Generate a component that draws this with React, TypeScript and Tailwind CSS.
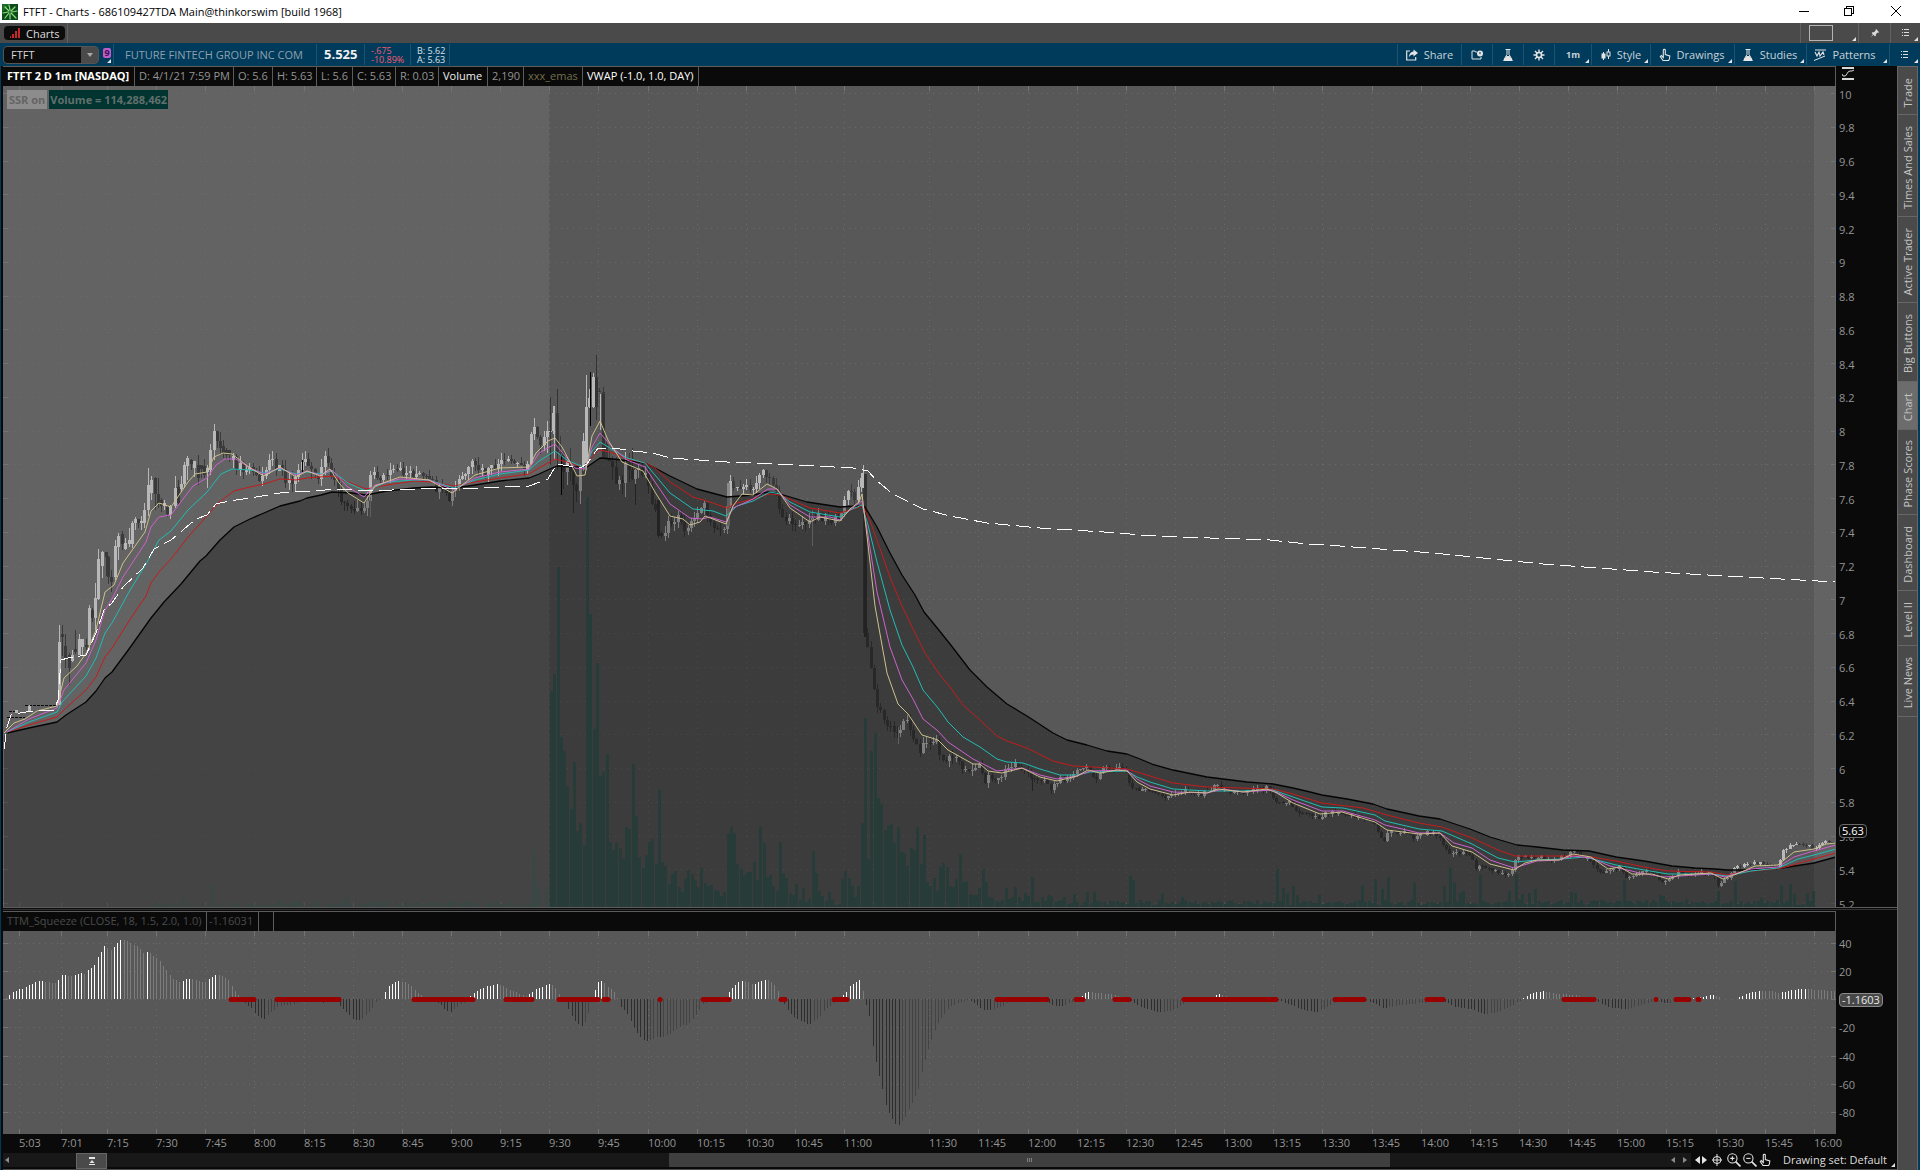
import type { ReactNode } from "react";

type Point = [number, number];

const parsePoints = (text: string): Point[] =>
  text
    .trim()
    .split(/\s+/)
    .map((pair) => pair.split(",").map(Number) as Point);

// linear interpolation along a list of points sorted by x
const valueAt = (points: Point[], x: number) => {
  if (x <= points[0][0]) return points[0][1];
  for (let i = 1; i < points.length; i++) {
    const [x0, y0] = points[i - 1];
    const [x1, y1] = points[i];
    if (x <= x1) return y0 + ((y1 - y0) * (x - x0)) / (x1 - x0);
  }
  return points[points.length - 1][1];
};

// repeatable noise, 0..1
const noise = (n: number) => {
  const v = Math.sin(n * 12.9898) * 43758.5453;
  return v - Math.floor(v);
};

const BAR = 3.27;
const LEFT = 3;
const WIDTH = 1833;
const PRICE_TOP = 86;
const PRICE_HEIGHT = 821;
const SQUEEZE_TOP = 931;
const SQUEEZE_HEIGHT = 203;
const SQUEEZE_ZERO = 999;
const OPEN_X = 549;
const CLOSE_X = 1814;

const TIMES: [string, number][] = [
  ["5:03", 19], ["7:01", 61], ["7:15", 107], ["7:30", 156], ["7:45", 205],
  ["8:00", 254], ["8:15", 304], ["8:30", 353], ["8:45", 402], ["9:00", 451],
  ["9:15", 500], ["9:30", 549], ["9:45", 598], ["10:00", 648], ["10:15", 697],
  ["10:30", 746], ["10:45", 795], ["11:00", 844], ["11:30", 929], ["11:45", 978],
  ["12:00", 1028], ["12:15", 1077], ["12:30", 1126], ["12:45", 1175], ["13:00", 1224],
  ["13:15", 1273], ["13:30", 1322], ["13:45", 1372], ["14:00", 1421], ["14:15", 1470],
  ["14:30", 1519], ["14:45", 1568], ["15:00", 1617], ["15:15", 1666], ["15:30", 1716],
  ["15:45", 1765], ["16:00", 1814],
];

const PRICES = [
  "10", "9.8", "9.6", "9.4", "9.2", "9", "8.8", "8.6", "8.4", "8.2", "8", "7.8", "7.6",
  "7.4", "7.2", "7", "6.8", "6.6", "6.4", "6.2", "6", "5.8", "5.6", "5.4", "5.2",
];
const PRICE_STEP = 33.76;

const SQUEEZE_LABELS = ["40", "20", "", "-20", "-40", "-60", "-80"];
const SQUEEZE_STEP = 28.25;

const SLOW_EMA = `7,733 29,728 57,722 66,715 86,702 96,691 105,678 112,672 129,649 151,618 164,602 181,584 200,561 206,556 220,540 234,527 250,519 264,513 280,506 300,501 307,498 321,495 332,492 352,493 366,495 387,491 414,488 432,487 454,488 475,485 500,481 529,478 539,474 552,468 557,466 573,467 587,467 600,458 613,459 630,461 645,463 655,468 670,476 697,489 712,493 727,497 753,495 768,492 780,494 807,502 840,507 857,506 865,507 877,527 890,553 902,575 915,595 924,612 938,629 950,644 970,670 987,687 1007,704 1027,716 1053,733 1067,740 1087,745 1107,751 1127,754 1140,759 1152,764 1173,770 1207,777 1247,782 1273,784 1293,788 1310,792 1322,795 1347,799 1373,804 1387,809 1419,816 1440,819 1470,829 1490,837 1517,845 1537,847 1563,850 1589,851 1616,857 1644,861 1672,866 1695,868 1715,869 1727,870 1743,870 1782,868 1814,863 1836,857`;

const RED_EMA = `7,732 29,725 57,717 66,708 86,690 96,677 105,657 112,648 129,621 146,596 151,583 159,572 171,559 188,537 206,517 218,503 234,491 250,487 264,484 280,479 296,480 307,478 332,476 348,482 366,489 387,485 414,481 432,482 454,486 475,482 500,478 529,474 539,468 555,459 567,462 585,468 592,457 600,450 613,453 627,459 645,463 655,468 670,482 693,497 710,502 727,508 737,503 753,499 770,494 780,495 810,508 840,513 863,506 870,521 878,543 890,577 902,606 913,629 925,653 940,675 950,687 963,705 980,720 997,736 1007,741 1027,748 1053,761 1073,766 1093,767 1127,769 1150,776 1173,783 1207,787 1273,789 1293,794 1322,803 1363,808 1387,815 1419,823 1442,827 1472,838 1498,850 1515,856 1585,856 1616,861 1644,867 1668,871 1711,872 1727,875 1743,872 1782,868 1814,859 1836,853`;

const CYAN_EMA = `7,732 29,722 57,712 62,702 86,676 96,658 105,633 112,623 129,592 146,564 159,540 171,531 188,510 207,492 221,474 232,469 250,470 264,473 280,469 296,474 307,472 321,474 332,471 348,483 366,491 387,482 414,480 429,480 454,488 475,480 500,474 529,470 539,461 555,451 567,460 585,468 592,451 600,442 613,450 627,458 645,463 655,475 670,493 693,509 713,511 726,516 737,506 753,501 770,492 780,494 790,502 810,512 840,517 850,510 862,505 868,525 877,562 890,610 902,645 913,667 923,690 938,708 948,722 963,737 980,747 997,759 1007,762 1023,763 1040,769 1060,775 1077,775 1090,772 1127,771 1137,777 1150,782 1173,789 1207,791 1240,791 1273,790 1293,797 1322,807 1343,808 1375,815 1385,821 1419,829 1442,831 1472,844 1498,858 1515,862 1537,860 1561,859 1585,857 1616,865 1644,870 1668,874 1711,874 1727,876 1751,871 1778,868 1798,859 1814,855 1836,849`;

const PINK_EMA = `7,732 29,719 57,708 64,690 86,663 96,640 105,610 112,599 123,577 146,542 151,527 159,517 171,515 193,486 207,478 216,465 225,459 236,459 250,468 264,474 280,468 296,475 307,471 320,475 332,470 348,487 364,497 375,485 400,479 429,480 454,490 475,478 500,472 529,469 539,453 555,444 567,458 575,468 585,469 592,447 600,433 613,448 627,460 645,467 655,482 670,504 690,518 702,519 710,517 726,522 733,508 753,499 768,489 777,489 790,505 810,517 830,517 840,520 850,510 862,501 867,529 877,592 890,647 902,680 913,699 923,719 938,731 948,742 973,759 997,771 1022,768 1040,775 1057,779 1077,776 1090,771 1127,770 1137,779 1150,786 1173,792 1207,793 1223,789 1243,792 1272,790 1293,800 1322,811 1343,811 1375,820 1385,825 1419,833 1440,833 1454,843 1472,848 1490,860 1514,868 1537,861 1559,860 1573,856 1591,858 1610,866 1640,873 1664,877 1711,874 1725,877 1751,869 1778,867 1794,857 1810,852 1836,845`;

const FAST_EMA = `4,733 14,723 25,719 37,711 57,706 61,690 64,678 77,666 87,652 96,630 105,592 114,585 123,563 145,532 151,511 159,503 171,507 188,482 195,474 207,472 214,457 223,453 232,454 250,468 264,476 280,467 296,477 307,471 320,476 330,469 339,483 348,493 364,503 375,486 386,482 400,477 429,480 452,493 475,475 500,468 529,467 536,453 548,441 555,438 562,447 572,466 577,476 585,475 592,436 600,421 608,440 622,462 643,471 655,492 670,516 683,519 690,525 700,522 705,516 726,524 733,506 742,494 753,495 767,484 777,489 790,508 810,522 820,517 840,521 850,509 859,502 862,494 867,536 875,606 887,673 898,704 908,714 922,735 938,740 948,750 973,764 980,764 988,771 1002,773 1022,768 1040,777 1057,781 1077,776 1088,770 1100,773 1117,770 1127,771 1137,782 1150,789 1173,795 1190,792 1207,793 1218,789 1243,792 1267,789 1277,793 1293,803 1320,814 1342,812 1375,822 1387,830 1419,834 1440,833 1452,846 1472,852 1490,864 1514,870 1525,863 1537,860 1559,860 1573,854 1591,857 1608,869 1620,867 1632,874 1652,874 1668,879 1680,875 1711,873 1723,879 1739,873 1755,866 1778,865 1794,852 1814,849 1826,844 1836,843`;

const VWAP = `4,749 7,727 11,715 20,713 39,710 54,710 58,700 61,660 68,658 86,655 96,633 104,610 112,603 123,587 143,568 154,549 171,540 196,519 207,515 216,504 229,501 250,498 280,493 311,491 339,489 364,491 421,489 479,488 529,486 548,479 557,464 580,468 587,464 598,448 613,448 633,451 653,453 670,458 727,462 797,465 853,468 868,471 877,481 893,494 923,509 950,516 987,523 1040,528 1120,533 1140,535 1180,537 1270,540 1307,544 1340,546 1433,553 1543,564 1653,572 1763,578 1836,582`;

// x, body top, body bottom, wick top, wick bottom, rising
const EARLY_CANDLES: number[][] = [
  [16, 710, 713, 710, 713, 1], [29, 706, 711, 705, 712, 1],
  [59, 642, 705, 625, 705, 1], [62, 634, 637, 625, 656, 0], [65, 646, 658, 634, 668, 0],
  [69, 655, 668, 653, 685, 0], [72, 655, 661, 650, 662, 1], [75, 649, 652, 630, 654, 0],
  [79, 639, 655, 634, 655, 1], [82, 639, 647, 639, 656, 1], [86, 645, 647, 639, 650, 0],
  [89, 608, 645, 605, 650, 1], [92, 610, 618, 608, 622, 0], [95, 598, 618, 583, 630, 1],
  [98, 559, 599, 549, 600, 1], [102, 552, 566, 551, 578, 1], [106, 552, 557, 552, 576, 0],
  [108, 557, 577, 556, 584, 0], [111, 577, 582, 570, 592, 0], [115, 546, 577, 540, 580, 1],
  [118, 536, 547, 533, 560, 1], [122, 534, 544, 531, 550, 0], [125, 543, 549, 538, 550, 1],
  [129, 540, 544, 528, 547, 1], [132, 523, 544, 521, 548, 1], [135, 519, 523, 517, 530, 1],
  [138, 519, 523, 519, 528, 0], [141, 521, 523, 516, 530, 1], [144, 510, 523, 503, 528, 1],
  [148, 485, 510, 468, 516, 1], [151, 480, 493, 476, 500, 1], [155, 478, 494, 477, 510, 0],
  [158, 494, 503, 478, 508, 0], [161, 500, 506, 498, 512, 0], [164, 503, 506, 500, 510, 1],
  [167, 507, 514, 505, 517, 0], [170, 506, 515, 505, 519, 1], [175, 488, 506, 476, 508, 1],
  [178, 487, 503, 480, 504, 0], [181, 484, 489, 476, 492, 1], [184, 465, 484, 462, 488, 1],
  [187, 458, 466, 456, 480, 1], [191, 460, 464, 459, 470, 0], [194, 461, 468, 461, 477, 1],
  [198, 465, 478, 455, 485, 0], [201, 465, 469, 465, 478, 0], [204, 466, 475, 459, 478, 0],
  [207, 468, 472, 465, 488, 1], [210, 450, 470, 444, 475, 1], [214, 431, 450, 424, 460, 1],
  [217, 431, 441, 431, 448, 0], [220, 441, 448, 432, 455, 0], [223, 446, 453, 440, 458, 0],
  [226, 450, 455, 448, 460, 0], [229, 450, 455, 450, 462, 0],
];

const PRICE_PATH = parsePoints(
  `232,460 246,473 252,465 259,485 264,473 270,456 275,467 280,461 286,478 295,483 299,467 306,457 311,473 321,480 324,458 330,465 336,480 343,507 352,503 357,508 367,507 370,475 384,477 396,472 411,472 425,478 439,490 450,500 459,482 473,466 486,473 500,464 512,462 527,467 532,438 534,425 542,442 548,422 552,444 555,412 558,452 568,470 575,488 582,470 586,408 589,392 592,382 596,384 600,401 603,452 610,462 620,482 628,462 637,478 645,469 648,488 655,503 658,534 667,529 675,519 683,519 687,537 693,519 703,503 712,521 720,530 727,523 730,484 737,488 745,482 753,495 757,479 762,471 770,481 778,490 781,515 790,522 800,522 810,523 817,514 830,519 840,523 843,503 848,490 855,499 859,490 863,473 865,637 869,645 872,667 876,699 882,716 890,728 898,734 905,717 912,728 917,745 922,757 925,740 937,742 944,763 948,757 957,757 962,767 973,773 980,762 985,782 990,773 997,782 1007,770 1017,763 1025,770 1033,780 1043,778 1052,788 1060,780 1073,775 1085,767 1097,777 1107,768 1122,768 1128,773 1131,788 1147,790 1163,797 1177,795 1187,788 1197,795 1208,792 1217,785 1233,793 1250,790 1268,788 1277,800 1290,802 1297,812 1310,813 1320,818 1327,812 1342,812 1359,817 1375,823 1384,842 1389,832 1407,832 1415,838 1427,832 1440,835 1448,852 1470,853 1476,867 1498,871 1512,875 1517,858 1537,857 1559,860 1573,851 1591,860 1602,873 1622,867 1626,878 1636,873 1652,872 1662,882 1680,873 1701,873 1715,875 1719,885 1729,877 1737,867 1753,862 1780,867 1782,852 1792,844 1808,845 1814,850 1822,842 1834,842`
);

const WICK_SIZE = parsePoints(
  "232,12 330,12 400,11 530,9 545,22 610,20 660,12 700,9 800,9 865,9 1000,7 1080,5 1400,4 1560,4 1836,3"
);

// long wicks that stand out: x, top, bottom, colour
const LONG_WICKS: [number, number, number, string][] = [
  [550, 397, 465, "#333"], [554, 406, 460, "#b8b8b8"], [557, 389, 470, "#333"], [573, 470, 513, "#333"],
  [586, 375, 470, "#b8b8b8"], [590, 372, 426, "#000"], [596, 355, 420, "#333"], [561, 455, 495, "#000"],
  [600, 394, 430, "#b8b8b8"], [632, 448, 462, "#333"], [635, 484, 505, "#333"], [812, 510, 546, "#888"],
  [863, 465, 480, "#b8b8b8"], [1032, 778, 791, "#333"], [898, 727, 744, "#888"], [370, 497, 517, "#888"],
  [302, 460, 474, "#000"],
];

// x, top, bottom, colour of the widest bodies round the open and the sell-off
const BIG_BODIES: [number, number, number, string][] = [
  [585, 407, 463, "#b8b8b8"], [592, 382, 407, "#b8b8b8"], [595, 380, 407, "#333"],
  [602, 394, 458, "#333"], [727, 483, 526, "#8a8a8a"], [657, 500, 536, "#333"],
  [861, 473, 488, "#b8b8b8"], [864, 474, 637, "#333"],
];

const OPEN_VOLUME = [
  216, 233, 340, 170, 156, 121, 98, 145, 76, 84, 62, 410, 293, 178, 244, 131, 135, 153, 65, 57,
  64, 59, 48, 80, 78, 143, 91, 50, 39, 52, 65, 68, 43, 117, 45, 41, 23, 33, 36, 20,
  15, 28, 37, 33, 27, 20, 39, 24, 21, 22, 17, 16, 11, 15, 73, 80, 74, 43, 38, 32,
  35, 35, 45, 27, 80, 64, 30, 32, 21, 16, 65, 34, 29, 14, 12, 23, 7, 19, 5, 8,
  56, 34, 16, 11, 6, 15, 7, 2, 3, 28, 36, 29, 21, 10, 21, 84, 189, 48, 156, 174,
  109, 103, 77, 82, 83, 64, 80, 55, 54, 41, 59, 57, 80, 43, 72, 25, 21, 29, 16, 40,
  44, 40, 21, 20, 28, 53, 25, 26, 13, 12, 12, 19, 38, 25, 10, 9, 6, 5, 7, 19,
  8, 10, 20, 10, 6, 14, 11, 30, 5, 5, 10, 6, 12, 11,
];

const VOLUME_PEAKS = parsePoints(
  `184,9 211,22 345,10 518,19 534,57 537,25 540,17 546,20 1065,10 1075,13 1088,15 1094,15 1130,31 1133,27 1163,14 1183,10 1278,38 1284,19 1288,14 1294,21 1297,12 1320,12 1363,22 1376,28 1383,18 1387,30 1415,24 1445,21 1451,39 1455,24 1459,14 1464,16 1478,21 1481,32 1508,16 1517,33 1523,13 1530,14 1536,18 1563,15 1572,15 1576,14 1599,12 1625,27 1659,12 1664,11 1687,8 1717,16 1736,26 1760,9 1782,22 1789,23 1793,14 1808,14 1812,16`
);

const SQUEEZE = parsePoints(
  `6,1 9,4 13,7 20,10 23,10 33,16 40,18 55,16 60,21 62,24 72,23 82,26 84,25 89,30 96,35 98,42 102,49 104,53 111,49 118,57 121,60 131,56 138,52 144,45 147,47 151,46 154,41 158,41 160,38 167,27 173,20 180,17 187,20 194,20 200,17 206,17 213,23 216,25 222,23 227,20 233,12 236,6 241,0 246,-5 252,-10 256,-15 262,-20 265,-20 271,-13 279,-7 294,-5 302,-3 316,0 322,-5 327,0 331,3 337,0 340,-7 347,-14 353,-20 358,-21 363,-20 369,-13 376,-3 382,0 384,5 389,13 396,18 404,17 410,14 416,8 422,3 429,0 439,-4 445,-11 451,-13 457,-8 465,-3 471,4 482,11 488,13 498,15 508,10 520,5 527,3 535,10 541,11 547,15 553,14 557,7 565,-3 570,-14 576,-24 583,-28 587,-18 590,-5 594,6 596,12 599,20 606,14 612,9 616,4 619,-5 629,-18 633,-27 639,-37 642,-40 646,-42 649,-42 656,-38 662,-38 668,-36 675,-31 681,-27 688,-25 695,-18 698,-13 703,-5 711,-2 724,0 727,4 731,10 737,16 740,19 747,17 753,14 760,18 767,20 773,15 777,11 780,3 784,-5 792,-17 799,-21 809,-26 816,-21 826,-10 833,-4 840,0 845,6 851,14 858,18 861,21 864,1 869,-17 874,-54 881,-86 887,-110 894,-124 898,-127 904,-120 911,-106 918,-90 924,-65 930,-43 937,-26 943,-16 950,-8 960,-3 967,-1 973,-3 983,-11 992,-11 1003,-7 1011,-2 1044,-1 1054,-7 1062,-7 1071,-3 1079,0 1085,6 1089,7 1100,6 1109,5 1122,2 1128,0 1136,-6 1146,-10 1159,-13 1172,-12 1183,-5 1191,0 1209,0 1218,5 1228,2 1236,0 1273,0 1280,-2 1294,-7 1307,-12 1318,-13 1325,-9 1337,-3 1368,-2 1384,-9 1402,-6 1421,-4 1443,-2 1456,-8 1470,-10 1484,-15 1498,-13 1511,-7 1521,-1 1523,1 1533,6 1543,8 1558,5 1574,4 1584,2 1594,0 1600,-4 1611,-9 1627,-10 1643,-5 1656,-2 1666,-4 1676,-3 1688,0 1713,4 1717,3 1721,0 1735,0 1749,6 1758,8 1770,8 1780,6 1792,9 1804,10 1819,9 1833,8`
);

const SQUEEZE_ON: [number, number][] = [
  [228, 256], [274, 341], [411, 475], [503, 534], [556, 600], [601, 610], [657, 662], [700, 731],
  [778, 787], [831, 849], [994, 1049], [1073, 1085], [1112, 1131], [1181, 1278], [1332, 1366],
  [1424, 1445], [1561, 1596], [1653, 1658], [1673, 1691], [1696, 1700],
];

const Grid = ({ top, height, rows }: { top: number; height: number; rows: number[] }) => (
  <g stroke="#6b6b6b" shapeRendering="crispEdges">
    {TIMES.map(([label, x]) => (
      <g key={label}>
        <path d={`M${x + 0.5} ${top}v${height}`} strokeDasharray="1 5" />
        <path d={`M${x + 0.5} ${top}v5M${x + 0.5} ${top + height - 5}v5`} stroke="#747474" />
      </g>
    ))}
    {rows.map((y) => (
      <g key={y}>
        <path d={`M${LEFT} ${y + 0.5}h${WIDTH}`} strokeDasharray="1 5" />
        <path d={`M${LEFT} ${y + 0.5}h5M${LEFT + WIDTH - 5} ${y + 0.5}h5`} stroke="#747474" />
      </g>
    ))}
  </g>
);

const Candles = () => {
  const bars: ReactNode[] = [];
  EARLY_CANDLES.forEach(([x, top, bottom, high, low, up]) => {
    const fill = up ? "#b8b8b8" : "#3a3a3a";
    bars.push(
      <g key={`e${x}`} fill={fill}>
        <rect x={x} y={high} width="1" height={low - high} />
        <rect x={x - 1} y={top} width="3" height={Math.max(1, bottom - top)} />
      </g>
    );
  });
  let open = valueAt(PRICE_PATH, 232);
  for (let i = 0; 233 + i * BAR < 1835; i++) {
    const x = Math.round(233 + i * BAR);
    const size = valueAt(WICK_SIZE, x);
    const close = valueAt(PRICE_PATH, x + 1) + (noise(i) - 0.5) * size;
    const top = Math.min(open, close);
    const height = Math.max(1, Math.abs(close - open));
    const high = top - noise(i + 900) * size * 0.8;
    const low = top + height + noise(i + 1800) * size * 0.8;
    bars.push(
      <g key={x} fill={close < open ? "#b8b8b8" : "#3a3a3a"}>
        <rect x={x} y={high} width="1" height={low - high} />
        <rect x={x - 1} y={top} width="3" height={height} />
      </g>
    );
    open = close;
  }
  return (
    <g shapeRendering="crispEdges">
      <path d="M9 711.5h8M25 705.5h32M7 717.5h18" stroke="#0a0a0a" strokeDasharray="3 1" />
      {bars}
      {LONG_WICKS.map(([x, top, bottom, color]) => (
        <rect key={x} x={x} y={top} width="1" height={bottom - top} fill={color} />
      ))}
      {BIG_BODIES.map(([x, top, bottom, color]) => (
        <rect key={x} x={x} y={top} width="3" height={bottom - top} fill={color} />
      ))}
    </g>
  );
};

const Volume = () => {
  const bars: ReactNode[] = [];
  const base = PRICE_TOP + PRICE_HEIGHT;
  for (let i = 0; 150 + i * BAR < OPEN_X; i++) {
    const x = Math.round(150 + i * BAR);
    const peak = VOLUME_PEAKS.find(([px]) => Math.abs(px - x) < 1.7);
    const h = peak ? peak[1] : Math.round(noise(i + 50) * 6);
    bars.push(<rect key={x} x={x - 1} y={base - h} width="3" height={h} fill="#3a4744" />);
  }
  for (let i = 0; OPEN_X + 2 + i * BAR < CLOSE_X; i++) {
    const x = Math.round(OPEN_X + 2 + i * BAR);
    const peak = VOLUME_PEAKS.find(([px]) => Math.abs(px - x) < 1.7);
    const h = OPEN_VOLUME[i] ?? (peak ? peak[1] : Math.round(2 + noise(i) * 5));
    bars.push(<rect key={x} x={x - 1} y={base - h} width="3" height={h} fill="#273b38" />);
  }
  return <g shapeRendering="crispEdges">{bars}</g>;
};

const PriceChart = () => (
  <svg
    className="block h-full w-full bg-[#585858]"
    viewBox={`${LEFT} ${PRICE_TOP} ${WIDTH} ${PRICE_HEIGHT}`}
    preserveAspectRatio="none"
    role="img"
    aria-label="FTFT price"
  >
    <rect x={LEFT} y={PRICE_TOP} width={OPEN_X - LEFT} height={PRICE_HEIGHT} fill="#636363" />
    <rect x={CLOSE_X} y={PRICE_TOP} width="30" height={PRICE_HEIGHT} fill="#636363" />
    <Grid
      top={PRICE_TOP}
      height={PRICE_HEIGHT}
      rows={PRICES.map((_, i) => Math.round(93 + i * PRICE_STEP))}
    />
    <Candles />
    <path d={`M4 907L4 735L${SLOW_EMA}V907Z`} fill="#000" fillOpacity=".31" />
    <Volume />
    <g fill="none" strokeWidth="1" strokeLinejoin="round">
      <polyline points={SLOW_EMA} stroke="#050505" strokeWidth="1.3" />
      <polyline points={RED_EMA} stroke="#c41c1c" />
      <polyline points={CYAN_EMA} stroke="#22bcb4" />
      <polyline points={PINK_EMA} stroke="#cc62cc" />
      <polyline points={FAST_EMA} stroke="#cdc08c" />
      <polyline points={VWAP} stroke="#fff" strokeDasharray="15 6" shapeRendering="crispEdges" />
    </g>
    <path d="M1835.5 86V907" stroke="#6a6a6a" />
  </svg>
);

const SqueezeChart = () => {
  const bars: ReactNode[] = [];
  for (let i = 0; 6 + i * BAR < 1834; i++) {
    const x = Math.round(6 + i * BAR);
    const v = Math.round(valueAt(SQUEEZE, x));
    const slope = valueAt(SQUEEZE, x) - valueAt(SQUEEZE, x - BAR);
    let fill = slope > 0.05 ? "#fff" : "#7c7c7c";
    if (v < 0) fill = slope > 0.05 ? "#434343" : "#2d2d2d";
    bars.push(
      <rect
        key={x}
        x={x}
        y={v > 0 ? SQUEEZE_ZERO - v : SQUEEZE_ZERO}
        width="1"
        height={Math.abs(v)}
        fill={fill}
      />
    );
  }
  return (
    <svg
      className="block h-full w-full bg-[#585858]"
      viewBox={`${LEFT} ${SQUEEZE_TOP} ${WIDTH} ${SQUEEZE_HEIGHT}`}
      preserveAspectRatio="none"
      role="img"
      aria-label="TTM Squeeze"
    >
      <Grid
        top={SQUEEZE_TOP}
        height={SQUEEZE_HEIGHT}
        rows={[943, 971, 999, 1027, 1056, 1084, 1112]}
      />
      <g shapeRendering="crispEdges">{bars}</g>
      <g stroke="#990000" strokeWidth="5" strokeLinecap="round">
        {SQUEEZE_ON.map(([from, to]) => (
          <path key={from} d={`M${from + 3} 999.5H${to - 2}`} />
        ))}
      </g>
    </svg>
  );
};

/* icons */

const Corner = () => (
  <svg className="absolute right-0.5 bottom-0.5 h-1 w-1" viewBox="0 0 4 4">
    <path d="M4 0v4H0z" fill="#e4e4e4" />
  </svg>
);

const LogoIcon = () => (
  <svg className="h-4 w-4" viewBox="0 0 16 16">
    <rect width="16" height="16" fill="#0d4a1c" />
    <path d="M0 0h8L0 9z" fill="#1a6b2a" />
    <path
      d="M7 7L3 3M8 6L7 1M9 7l4-4M10 8l5-1M9 9l5 5M8 10v5M7 9l-4 5M6 8L1 9"
      stroke="#8ee07a"
      strokeWidth="1.2"
      strokeLinecap="round"
    />
  </svg>
);

const ListIcon = () => (
  <svg className="h-2.5 w-3" viewBox="0 0 12 10" stroke="#dcdcdc" shapeRendering="crispEdges">
    <path d="M2 1.5h1M4 1.5h5M2 4.5h1M4 4.5h5M2 7.5h1M4 7.5h5" />
  </svg>
);

const PinIcon = () => (
  <svg className="h-2.5 w-2.5" viewBox="0 0 12 12">
    <path d="M7 1l4 4-1 .6-1-.2-2 2 .2 2L6 10 4 8 1 11l2.4-3.6L2 6l.8-1 2 .1 2-2z" fill="#dcdcdc" />
  </svg>
);

const ShareIcon = () => (
  <svg className="h-3 w-3" viewBox="0 0 12 12">
    <path d="M4 2H.7v9h9V8" fill="none" stroke="#e4e4e4" strokeWidth="1.2" />
    <path d="M7.5.5L12 4 7.5 7.5v-2C5 5.5 3.8 6.5 2.8 8.5 3 5 4.8 2.8 7.5 2.5z" fill="#e4e4e4" />
  </svg>
);

const FolderIcon = () => (
  <svg className="h-3 w-3" viewBox="0 0 12 12">
    <path d="M6 3H4.5L4 2H1v8h9V8" fill="none" stroke="#e4e4e4" />
    <circle cx="9" cy="4.5" r="3" fill="#e4e4e4" />
    <path d="M9 3v2.2" stroke="#003b5c" />
  </svg>
);

const FlaskIcon = () => (
  <svg className="h-3.5 w-3" viewBox="0 0 12 14">
    <path d="M3.5 1.5h5M5 1.5v5L2 11.5h8L7 6.5v-5" fill="none" stroke="#e4e4e4" />
    <path d="M4.5 8h3l3.5 5H1z" fill="#e4e4e4" />
  </svg>
);

const GearIcon = () => (
  <svg className="h-3 w-3" viewBox="0 0 12 12" stroke="#e4e4e4" fill="none">
    <circle cx="6" cy="6" r="2.5" strokeWidth="1.6" />
    <path d="M6 .5V3M6 9v2.5M.5 6H3M9 6h2.5M2 2l2 2M8 8l2 2M10 2L8 4M4 8l-2 2" strokeWidth="1.4" />
  </svg>
);

const StyleIcon = () => (
  <svg className="h-3 w-2.5" viewBox="0 0 10 12" stroke="#e4e4e4">
    <path d="M2.5 3v8" />
    <rect x="1" y="5" width="3" height="4" fill="#e4e4e4" />
    <path d="M7.5 0v3M7.5 7v3" />
    <rect x="6" y="3" width="3" height="4" fill="none" />
  </svg>
);

const HandIcon = () => (
  <svg className="h-3.5 w-3" viewBox="0 0 12 14" fill="none" stroke="#e4e4e4" strokeWidth="1.1">
    <path d="M4.3 9.5l-2-2-1 1 2.7 4h5.5c1-1 1.3-2.5 1.3-4.5L6.3 6.5V2c0-1-2-1-2 0z" />
  </svg>
);

const PatternsIcon = () => (
  <svg className="h-3 w-3" viewBox="0 0 12 12" fill="none" stroke="#e4e4e4">
    <path d="M1 1h11M0 11.5L11 7" />
    <path d="M1 3l2 4 2-4 1 4 3-4 1 3" strokeWidth="1.1" />
  </svg>
);

const AxisIcon = () => (
  <svg className="ml-1.5 block h-3.5 w-3" viewBox="0 0 12 14" fill="none" stroke="#d8d8d8">
    <path d="M0 2h12M0 13h12" strokeWidth="2" />
    <path d="M0 8l1 2h2c2 0 2-5 5-5h2l2-1" />
  </svg>
);

const Caret = ({ flip = false }: { flip?: boolean }) => (
  <svg className={flip ? "h-1.5 w-1 rotate-180" : "h-1.5 w-1"} viewBox="0 0 4 6">
    <path d="M4 0v6L0 3z" fill="#8a8a8a" />
  </svg>
);

interface ToolProps {
  label?: string;
  icon?: ReactNode;
  width: string;
  corner?: boolean;
  title: string;
}

const Tool = ({ label, icon, width, corner = false, title }: ToolProps) => (
  <button
    title={title}
    className={`relative flex h-full shrink-0 items-center justify-center gap-1.5 border-l border-[#1c5272] ${width}`}
  >
    {icon}
    {label && <span>{label}</span>}
    {corner && <Corner />}
  </button>
);

const HEADER_CELLS: [string, string, string][] = [
  ["FTFT 2 D 1m [NASDAQ]", "w-[132px]", "font-bold text-white"],
  ["D: 4/1/21 7:59 PM", "w-[99px]", "text-[#949494]"],
  ["O: 5.6", "w-[39px]", "text-[#949494]"],
  ["H: 5.63", "w-[44px]", "text-[#949494]"],
  ["L: 5.6", "w-[36px]", "text-[#949494]"],
  ["C: 5.63", "w-[43px]", "text-[#949494]"],
  ["R: 0.03", "w-[43px]", "text-[#949494]"],
  ["Volume", "w-[49px]", "text-[#f0f0f0]"],
  ["2,190", "w-[36px]", "text-[#949494]"],
  ["xxx_emas", "w-[59px]", "text-[#746e4c]"],
  ["VWAP (-1.0, 1.0, DAY)", "w-[116px]", "text-white"],
];

const SIDE_TABS: [string, string][] = [
  ["Trade", "h-[48px]"],
  ["Times And Sales", "h-[102px]"],
  ["Active Trader", "h-[86px]"],
  ["Big Buttons", "h-[79px]"],
  ["Chart", "h-[48px]"],
  ["Phase Scores", "h-[85px]"],
  ["Dashboard", "h-[76px]"],
  ["Level II", "h-[55px]"],
  ["Live News", "h-[71px]"],
];

const TitleBar = () => (
  <header className="flex h-[23px] shrink-0 items-center bg-white pl-0.5 text-black">
    <LogoIcon />
    <h1 className="ml-[5px] text-[11px]">FTFT - Charts - 686109427TDA Main@thinkorswim [build 1968]</h1>
    <div className="ml-auto flex h-full items-center pb-0.5">
      <button className="flex w-[45px] justify-center" aria-label="Minimize">
        <svg className="h-2.5 w-2.5" viewBox="0 0 10 10" stroke="#000" shapeRendering="crispEdges">
          <path d="M0 5.5h10" />
        </svg>
      </button>
      <button className="flex w-[45px] justify-center" aria-label="Restore">
        <svg className="h-2.5 w-2.5" viewBox="0 0 10 10" stroke="#000" fill="none" shapeRendering="crispEdges">
          <path d="M.5 2.5h7v7h-7zM2.5 2.5v-2h7v7h-2" />
        </svg>
      </button>
      <button className="flex w-[49px] justify-center" aria-label="Close">
        <svg className="h-2.5 w-2.5" viewBox="0 0 10 10" stroke="#000">
          <path d="M0 0l10 10M10 0L0 10" />
        </svg>
      </button>
    </div>
  </header>
);

const TabRow = () => (
  <div className="flex h-5 shrink-0 bg-[#4a4a4a]">
    <div className="flex items-center border-r border-[#626262] pr-0.5 pl-1">
      <button className="flex h-3.5 items-center gap-1.5 rounded bg-[#0c0c0c] px-1.5 text-[11px] text-[#dcdcdc]">
        <svg className="h-2.5 w-2.5" viewBox="0 0 10 10" fill="#c62828" shapeRendering="crispEdges">
          <path d="M0 8h1v2H0zM2 6h2v4H2zM5 3h2v7H5zM8 0h2v10H8z" />
        </svg>
        Charts
      </button>
    </div>
    <div className="ml-auto flex">
      <button
        title="Layout"
        className="relative flex w-[58px] items-center border-l border-[#626262] pl-2"
      >
        <span className="h-4 w-6 border border-[#b4b4b4]" />
        <Corner />
      </button>
      <button title="Pin" className="flex w-8 items-center justify-center border-l border-[#626262]">
        <PinIcon />
      </button>
      <button
        title="Menu"
        className="relative flex w-[30px] items-center justify-center border-l border-[#626262]"
      >
        <ListIcon />
        <Corner />
      </button>
    </div>
  </div>
);

const SymbolBar = () => (
  <div className="flex h-[23px] shrink-0 items-center bg-[#003b5c] py-px text-[12px] text-[#c8d2d8]">
    <div className="ml-[3px] flex h-[18px] w-24 items-center rounded-sm border border-[#555] bg-[#0c0c0c]">
      <input
        aria-label="Symbol"
        defaultValue="FTFT"
        className="min-w-0 flex-1 bg-transparent pl-[7px] text-[11px] text-[#d8d8d8] outline-none"
      />
      <button className="flex h-full w-[17px] items-center justify-center bg-[#4a4a4a]" aria-label="Symbols">
        <svg className="h-1 w-1.5" viewBox="0 0 6 4">
          <path d="M0 0h6L3 4z" fill="#a8a8a8" />
        </svg>
      </button>
    </div>
    <button className="relative flex h-full w-3.5 items-center justify-end" title="Link">
      <span className="mr-0.5 mb-1 h-2.5 w-2 rounded-xs bg-[#c05cc8] text-center text-[9px] leading-[10px] font-bold text-[#3c1050]">
        9
      </span>
      <Corner />
    </button>
    <div className="flex h-full w-[203px] items-center border-l border-[#1c5272] pl-[11px] text-[11px] text-[#8fa0ac]">
      FUTURE FINTECH GROUP INC COM
    </div>
    <div className="flex h-full w-12 items-center border-l border-[#1c5272] pl-[7px] text-[13px] font-bold text-[#f0f0f0]">
      5.525
    </div>
    <div className="flex h-full w-[46px] flex-col justify-center border-l border-[#1c5272] pl-1.5 text-[9px] leading-[9px] text-[#f05c70]">
      <span>-.675</span>
      <span>-10.89%</span>
    </div>
    <div className="flex h-full w-10 flex-col justify-center border-x border-[#1c5272] pl-1.5 text-[9px] leading-[9px] text-[#dce2e6]">
      <span>B: 5.62</span>
      <span>A: 5.63</span>
    </div>
    <div className="ml-auto flex h-full text-[11px]">
      <Tool title="Share" width="w-16" icon={<ShareIcon />} label="Share" />
      <Tool title="Report" width="w-[31px]" icon={<FolderIcon />} />
      <Tool title="Flask" width="w-[31px]" icon={<FlaskIcon />} />
      <Tool title="Settings" width="w-[31px]" icon={<GearIcon />} />
      <button title="Timeframe" className="relative w-[37px] border-l border-[#1c5272] text-[9px] font-bold">
        1m
        <Corner />
      </button>
      <Tool title="Style" width="w-[59px]" icon={<StyleIcon />} label="Style" corner />
      <Tool title="Drawings" width="w-[84px] pr-0.5" icon={<HandIcon />} label="Drawings" corner />
      <Tool title="Studies" width="w-[72px] pr-0.5" icon={<FlaskIcon />} label="Studies" corner />
      <Tool title="Patterns" width="w-[83px] pr-1.5" icon={<PatternsIcon />} label="Patterns" corner />
      <Tool title="More" width="w-[31px]" icon={<ListIcon />} corner />
    </div>
  </div>
);

const PricePanel = () => (
  <section className="flex min-h-0 grow-[841] basis-0">
    <div className="flex min-w-0 flex-1 flex-col">
      <div className="flex h-5 shrink-0 border-t border-r border-[#5c5c5c] text-[11px] whitespace-nowrap">
        {HEADER_CELLS.map(([text, width, color]) => (
          <span
            key={text}
            className={`flex shrink-0 items-center border-r border-[#5c5c5c] pb-0.5 pl-1 ${width} ${color}`}
          >
            {text}
          </span>
        ))}
      </div>
      <div className="relative min-h-0 flex-1">
        <PriceChart />
        <div className="absolute top-1 left-1 flex gap-0.5 text-[11px] leading-[19px] font-bold">
          <span className="bg-[#8c8c8c] px-0.5 text-[#646464]">SSR on</span>
          <span className="bg-[#003431] px-px text-[#62706c]">Volume = 114,288,462</span>
        </div>
      </div>
    </div>
    <div className="flex w-[61px] shrink-0 flex-col text-[11px]">
      <div className="h-5 shrink-0">
        <AxisIcon />
      </div>
      <div className="relative min-h-0 flex-1 overflow-hidden text-[#949494]">
        {PRICES.map((price, i) => (
          <div
            key={price}
            className="flex items-end pl-[3px] leading-4"
            style={{ height: `${((i === 0 ? 16.6 : PRICE_STEP) / PRICE_HEIGHT) * 100}%` }}
          >
            {price}
          </div>
        ))}
        <span className="absolute top-[89.9%] left-[3px] rounded border border-[#6a6a6a] bg-[#0c0c0c] px-0.5 leading-3 text-white">
          5.63
        </span>
      </div>
    </div>
  </section>
);

const SqueezePanel = () => (
  <section className="flex min-h-0 grow-[223] basis-0">
    <div className="flex min-w-0 flex-1 flex-col">
      <div className="flex h-5 shrink-0 border-t border-r border-[#5c5c5c] text-[11px] whitespace-nowrap text-[#4a4a4a]">
        <span className="flex w-[204px] items-center border-r border-[#5c5c5c] pb-0.5 pl-1">
          TTM_Squeeze (CLOSE, 18, 1.5, 2.0, 1.0)
        </span>
        <span className="flex w-[52px] items-center border-r border-[#5c5c5c] pb-0.5 pl-0.5">-1.16031</span>
        <span className="w-[15px] border-r border-[#5c5c5c]" />
      </div>
      <div className="min-h-0 flex-1">
        <SqueezeChart />
      </div>
    </div>
    <div className="flex w-[61px] shrink-0 flex-col pt-5 text-[11px] text-[#949494]">
      <div className="relative min-h-0 flex-1">
        {SQUEEZE_LABELS.map((label, i) => (
          <div
            key={i}
            className="flex items-end pl-[3px] leading-4"
            style={{ height: `${((i === 0 ? 20.5 : SQUEEZE_STEP) / SQUEEZE_HEIGHT) * 100}%` }}
          >
            {label}
          </div>
        ))}
        <span className="absolute top-[30.5%] left-[3px] rounded border border-[#8a8a8a] bg-[#484848] px-0.5 leading-3 text-[#e8e8e8]">
          -1.1603
        </span>
      </div>
    </div>
  </section>
);

const TimeAxis = () => (
  <div className="flex h-[19px] shrink-0 items-center pb-0.5 text-[11px] text-[#949494]">
    <div className="flex min-w-0 flex-1">
      <span style={{ width: `${((TIMES[0][1] - LEFT) / WIDTH) * 100}%` }} />
      {TIMES.map(([label, x], i) => {
        const next = TIMES[i + 1]?.[1] ?? LEFT + WIDTH;
        return (
          <span key={label} className="shrink-0" style={{ width: `${((next - x) / WIDTH) * 100}%` }}>
            {label}
          </span>
        );
      })}
    </div>
    <div className="w-[61px] shrink-0" />
  </div>
);

const ScrollBar = () => (
  <div className="flex h-[17px] shrink-0 border-b border-[#4a4a4a] text-[#dcdcdc]">
    <div className="flex h-3.5 w-[73px] shrink-0 items-center bg-[#181818] pl-0.5">
      <Caret />
    </div>
    <button
      title="Expand"
      className="flex h-4 w-[31px] shrink-0 items-center justify-center border border-[#666] bg-[#4a4a4a]"
    >
      <svg className="h-2.5 w-2.5" viewBox="0 0 10 10" fill="#e4e4e4">
        <path d="M2 1h6v2H2zM5 4l2.5 3h-5zM2 8h6v1H2z" />
      </svg>
    </button>
    <div className="flex h-3.5 min-w-0 flex-1 bg-[#181818]">
      <div className="ml-[35.5%] flex w-[45.5%] items-center justify-center gap-px bg-[#3f3f3f]">
        <span className="h-1 w-px bg-[#808080]" />
        <span className="h-1 w-px bg-[#808080]" />
        <span className="h-1 w-px bg-[#808080]" />
      </div>
      <div className="ml-auto flex items-center gap-2 pr-1">
        <Caret />
        <Caret flip />
      </div>
    </div>
    <div className="flex h-3.5 shrink-0 items-center gap-1 pl-1">
      <svg className="h-2 w-3" viewBox="0 0 12 8" fill="#e4e4e4">
        <path d="M5 0v8L0 4zM7 0v8l5-4z" />
      </svg>
      <svg className="h-3 w-3" viewBox="0 0 12 12" fill="none" stroke="#e4e4e4">
        <ellipse cx="6" cy="6" rx="4" ry="3.5" />
        <path d="M6 0v12M1 6h10" />
      </svg>
      <div className="flex gap-0.5">
        {["M3 5h4M5 3v4", "M3 5h4"].map((sign) => (
          <svg key={sign} className="h-3.5 w-3.5" viewBox="0 0 13 13" fill="none" stroke="#e4e4e4">
            <circle cx="5" cy="5" r="4.3" />
            <path d={sign} />
            <path d="M8 8l4.5 4.5" strokeWidth="1.5" />
          </svg>
        ))}
        <HandIcon />
      </div>
    </div>
    <button className="relative ml-2 flex w-[118px] shrink-0 items-center pb-1 pl-1 text-[11px]">
      Drawing set: Default
      <Corner />
    </button>
  </div>
);

const SideTabs = () => (
  <nav className="flex w-[21px] shrink-0 flex-col border-x border-t border-[#666] bg-[#4a4a4a] text-[11px] text-[#c4c4c4]">
    {SIDE_TABS.map(([label, height]) => (
      <button
        key={label}
        className={`flex w-full shrink-0 items-center justify-center border-b border-[#666] pt-1 ${height} ${
          label === "Chart" ? "bg-[#6c6c6c]" : ""
        }`}
      >
        <span className="rotate-180 whitespace-nowrap [writing-mode:vertical-rl]">{label}</span>
      </button>
    ))}
  </nav>
);

export default function App() {
  return (
    <div className="flex h-screen flex-col overflow-hidden bg-[#0a0a0a] font-['Open_Sans','Noto_Sans',sans-serif] leading-none">
      <TitleBar />
      <TabRow />
      <SymbolBar />
      <main className="flex min-h-0 flex-1 border-r-2 border-l border-[#003b5c]">
        <div className="flex min-w-0 flex-1 flex-col pl-0.5">
          <PricePanel />
          <div className="flex h-1 shrink-0 flex-col justify-between border-t border-[#5c5c5c] pb-px">
            <span />
            <span className="h-px bg-[#333]" />
          </div>
          <SqueezePanel />
          <TimeAxis />
          <ScrollBar />
        </div>
        <SideTabs />
      </main>
    </div>
  );
}
